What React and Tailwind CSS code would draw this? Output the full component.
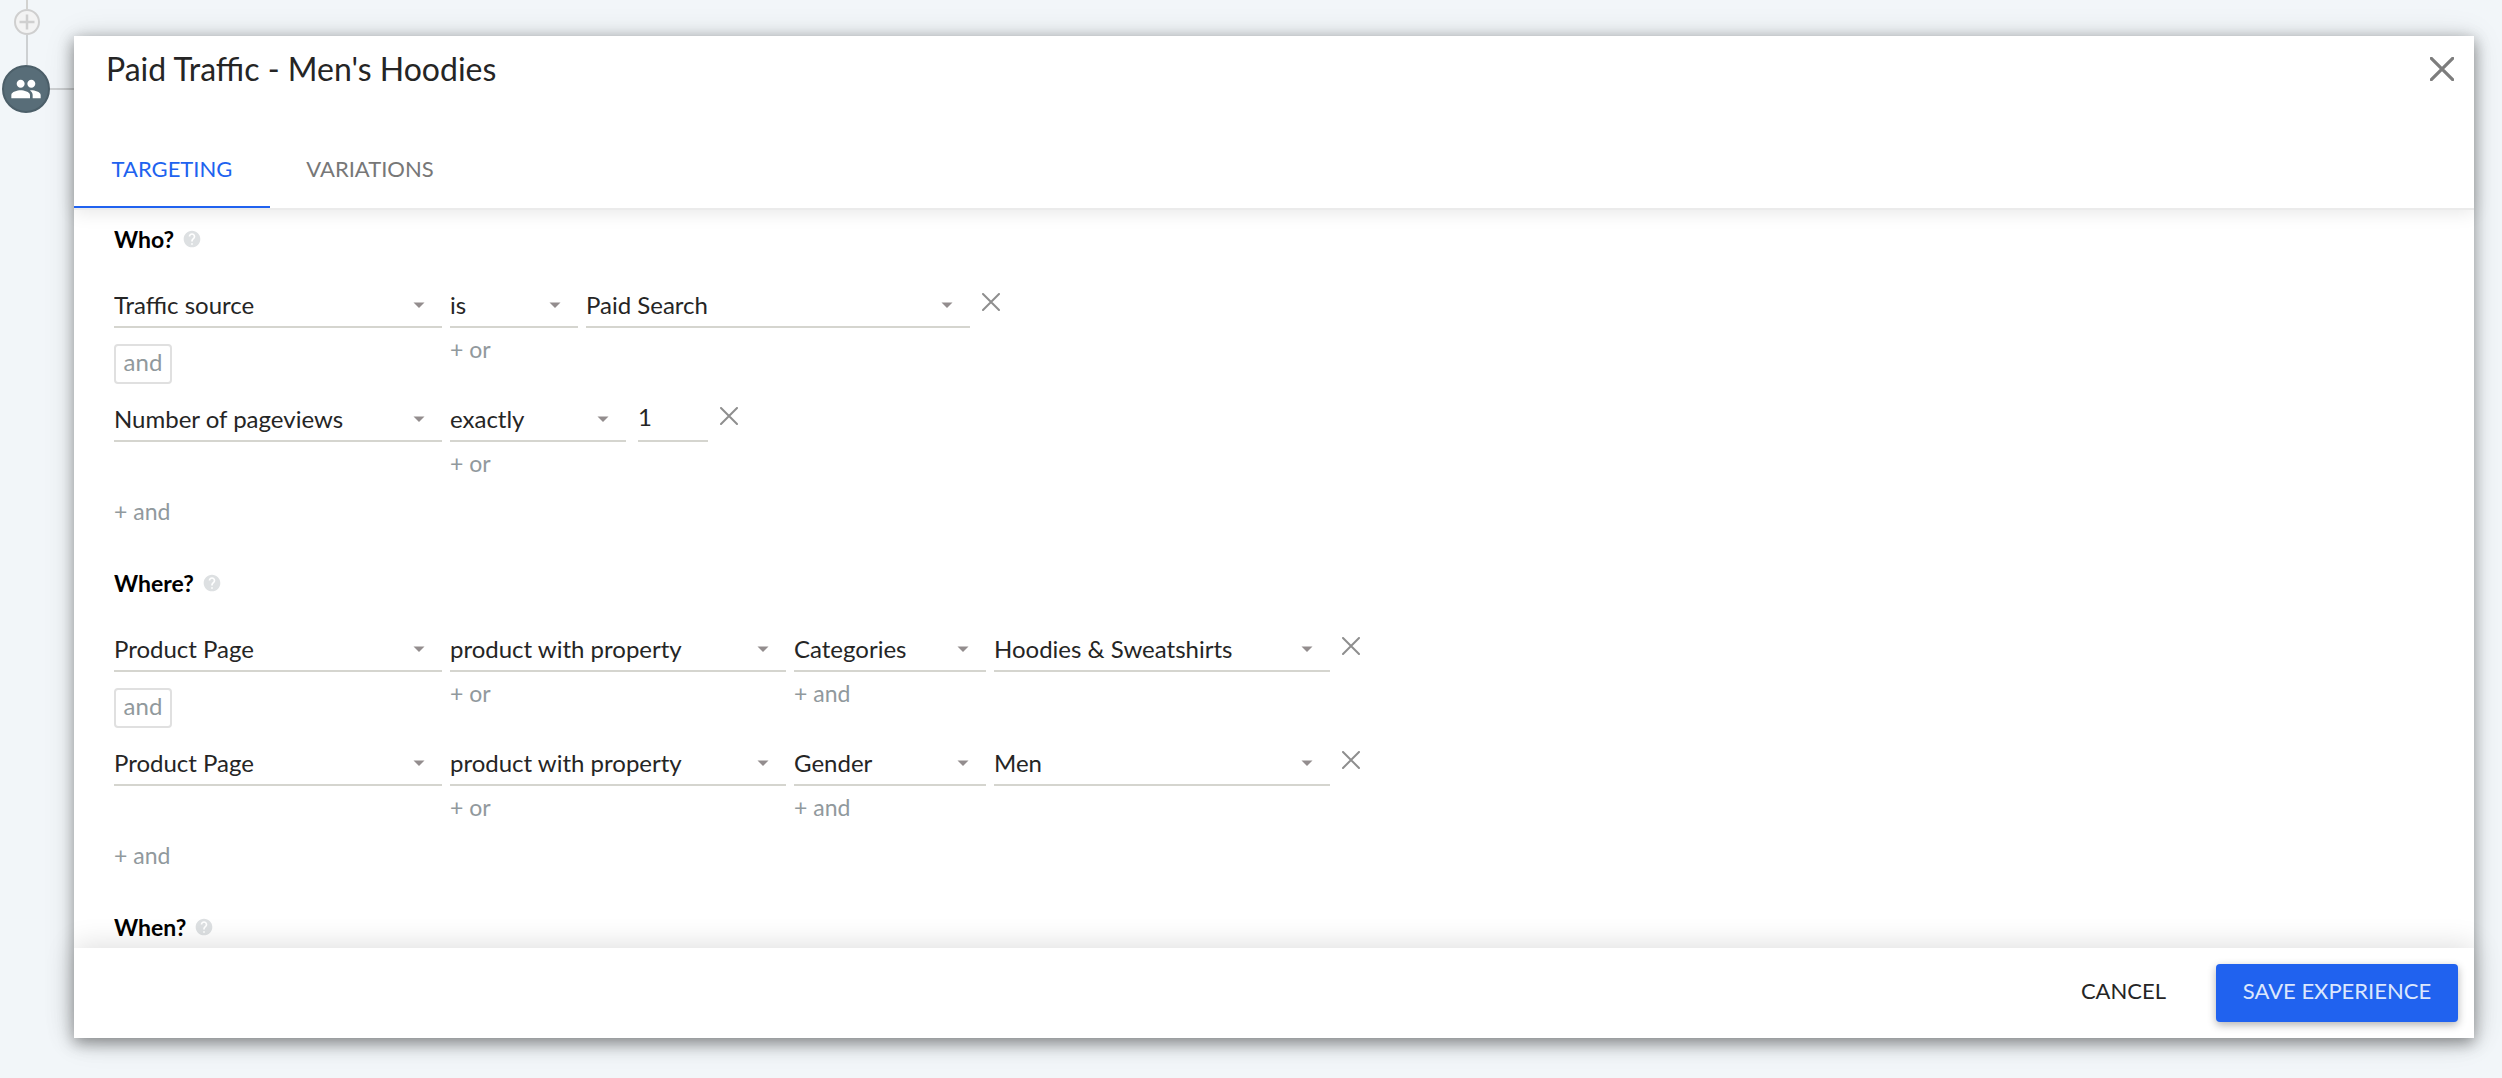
import React, { useState } from 'react';
import { MdHelp, MdPeople } from 'react-icons/md';

const WHO_RULES = [
  {
    fields: [
      { label: 'Condition', value: 'Traffic source', width: 'w-[328px]' },
      { label: 'Operator', value: 'is', width: 'w-32', add: '+ or' },
      { label: 'Value', value: 'Paid Search', width: 'w-96' },
    ],
  },
  {
    fields: [
      { label: 'Condition', value: 'Number of pageviews', width: 'w-[328px]' },
      { label: 'Operator', value: 'exactly', width: 'w-44', add: '+ or' },
      { label: 'Count', value: '1', type: 'text' },
    ],
  },
];

const WHERE_RULES = [
  {
    fields: [
      { label: 'Page', value: 'Product Page', width: 'w-[328px]' },
      { label: 'Operator', value: 'product with property', width: 'w-[336px]', add: '+ or' },
      { label: 'Property', value: 'Categories', width: 'w-48', add: '+ and' },
      { label: 'Value', value: 'Hoodies & Sweatshirts', width: 'w-[336px]' },
    ],
  },
  {
    fields: [
      { label: 'Page', value: 'Product Page', width: 'w-[328px]' },
      { label: 'Operator', value: 'product with property', width: 'w-[336px]', add: '+ or' },
      { label: 'Property', value: 'Gender', width: 'w-48', add: '+ and' },
      { label: 'Value', value: 'Men', width: 'w-[336px]' },
    ],
  },
];

const CloseIcon = ({ className, strokeWidth = 2 }) => (
  <svg className={className} viewBox="0 0 18 18" fill="none" stroke="currentColor" strokeWidth={strokeWidth} strokeLinecap="round" aria-hidden="true">
    <path d="M1 1 17 17M17 1 1 17" />
  </svg>
);

const AddButton = ({ children }) => (
  <button type="button" className="block h-7 text-[23px] leading-7 text-[#91999d]">
    {children}
  </button>
);

const SelectField = ({ label, value, width }) => (
  <div className={`relative ${width}`}>
    <select
      aria-label={label}
      defaultValue={value}
      className="block h-11 w-full appearance-none border-b-2 border-[#d5d5cf] bg-transparent pr-10 text-2xl text-[#252525] outline-none"
    >
      <option>{value}</option>
    </select>
    <svg className="pointer-events-none absolute top-[18px] right-[17px] h-1.5 w-3 text-[#938d8e]" viewBox="0 0 12 6" aria-hidden="true">
      <path d="M0.5 0.5h11L6 6z" fill="currentColor" />
    </svg>
  </div>
);

const TextField = ({ label, value }) => (
  <input
    type="text"
    aria-label={label}
    defaultValue={value}
    className="ml-1 block h-11 w-[70px] border-b-2 border-[#d5d5cf] bg-transparent pb-1.5 text-2xl text-[#252525] outline-none"
  />
);

const Rule = ({ fields, joined }) => (
  <div className="flex items-start gap-2">
    {fields.map((field, index) => (
      <div key={field.label}>
        {field.type === 'text' ? <TextField {...field} /> : <SelectField {...field} />}
        {field.add && (
          <div className="mt-[7px]">
            <AddButton>{field.add}</AddButton>
          </div>
        )}
        {joined && index === 0 && (
          <div className="mt-4 mb-3.5 flex h-10 w-[58px] items-center justify-center rounded border-2 border-[#e0e0e0] pb-1 text-2xl text-[#91999d]">
            and
          </div>
        )}
      </div>
    ))}
    <button type="button" aria-label="Remove condition" className="ml-1 flex h-9 items-center text-[#8e8e8e]">
      <CloseIcon className="size-[18px]" />
    </button>
  </div>
);

const SectionHeading = ({ title }) => (
  <div className="flex h-8 items-center gap-2">
    <h2 className="font-bold text-black">{title}</h2>
    <MdHelp className="size-5 text-[#dde0e2]" />
  </div>
);

const RuleSection = ({ title, rules }) => (
  <section className="pb-[42px]">
    <SectionHeading title={title} />
    <div className="mt-[29px] mb-5">
      {rules.map((rule, index) => (
        <Rule key={index} fields={rule.fields} joined={index < rules.length - 1} />
      ))}
    </div>
    <AddButton>+ and</AddButton>
  </section>
);

// Part of the campaign tree that stays visible next to the dialog
const TreeRail = () => (
  <aside className="w-[74px] shrink-0">
    <div className="flex w-[54px] flex-col items-center">
      <div className="h-[9px] w-0.5 bg-[#d2d2d0]" />
      <button type="button" aria-label="Add step" className="flex size-[26px] items-center justify-center rounded-full border-2 border-[#cfcfcf] bg-[#f3f3f3]">
        <svg className="size-4" viewBox="0 0 16 16" stroke="#cfcfcf" strokeWidth="2.5" aria-hidden="true">
          <path d="M8 0.5v15M0.5 8h15" />
        </svg>
      </button>
      <div className="h-[30px] w-0.5 bg-[#cdd0d2]" />
    </div>
    <div className="flex items-center pl-0.5">
      <button type="button" aria-label="Audience" className="flex size-12 shrink-0 items-center justify-center rounded-full border-2 border-[#4c5f69] bg-[#586d78] text-white">
        <MdPeople className="size-8 shrink-0" />
      </button>
      <div className="h-0.5 grow bg-[#cdd0d2]" />
    </div>
  </aside>
);

const App = () => {
  const [activeTab, setActiveTab] = useState('TARGETING');

  const tabClass = (tab, width) =>
    `${width} h-[78px] border-b-2 pt-0.5 text-[22px] ${
      activeTab === tab ? 'border-[#2062ef] text-[#2062ef]' : 'border-transparent text-[#777777]'
    }`;

  return (
    <div className="flex h-screen overflow-hidden bg-[#f2f6f9] font-['Lato','Open_Sans',sans-serif] text-[23px] leading-8">
      <TreeRail />
      <main className="flex min-w-0 grow pt-9 pr-7 pb-10">
        <div role="dialog" aria-labelledby="dialog-title" className="flex grow flex-col bg-white shadow-[0_5px_14px_rgba(0,0,0,0.36),0_2px_30px_rgba(0,0,0,0.12)]">
          <header className="relative z-10 border-b-2 border-[#ebebeb] bg-white shadow-[0_2px_18px_rgba(0,0,0,0.1)]">
            <div className="flex h-[66px] items-center justify-between pr-5 pl-8">
              <h1 id="dialog-title" className="text-[32px] text-[#252525]">Paid Traffic - Men's Hoodies</h1>
              <button type="button" aria-label="Close" className="text-[#7d7d7d]">
                <CloseIcon className="size-6" strokeWidth={2.4} />
              </button>
            </div>
            <div role="tablist" className="mt-7 flex">
              <button type="button" role="tab" aria-selected={activeTab === 'TARGETING'} className={tabClass('TARGETING', 'w-[196px]')} onClick={() => setActiveTab('TARGETING')}>
                TARGETING
              </button>
              <button type="button" role="tab" aria-selected={activeTab === 'VARIATIONS'} className={tabClass('VARIATIONS', 'w-[200px]')} onClick={() => setActiveTab('VARIATIONS')}>
                VARIATIONS
              </button>
            </div>
          </header>

          <div className="min-h-0 grow overflow-y-auto px-10 pt-[13px]">
            <RuleSection title="Who?" rules={WHO_RULES} />
            <RuleSection title="Where?" rules={WHERE_RULES} />
            <SectionHeading title="When?" />
          </div>

          <footer className="relative z-10 flex h-[90px] shrink-0 items-center justify-end gap-[34px] bg-white pr-4 text-[22px] shadow-[0_-2px_28px_rgba(0,0,0,0.14)]">
            <button type="button" className="px-4 pb-1 text-[#252525]">CANCEL</button>
            <button type="button" className="h-[58px] w-[242px] rounded bg-[#2062ef] pb-1 text-[#dce7fd] shadow-[0_3px_8px_rgba(0,0,0,0.3)]">
              SAVE EXPERIENCE
            </button>
          </footer>
        </div>
      </main>
    </div>
  );
};

export default App;
